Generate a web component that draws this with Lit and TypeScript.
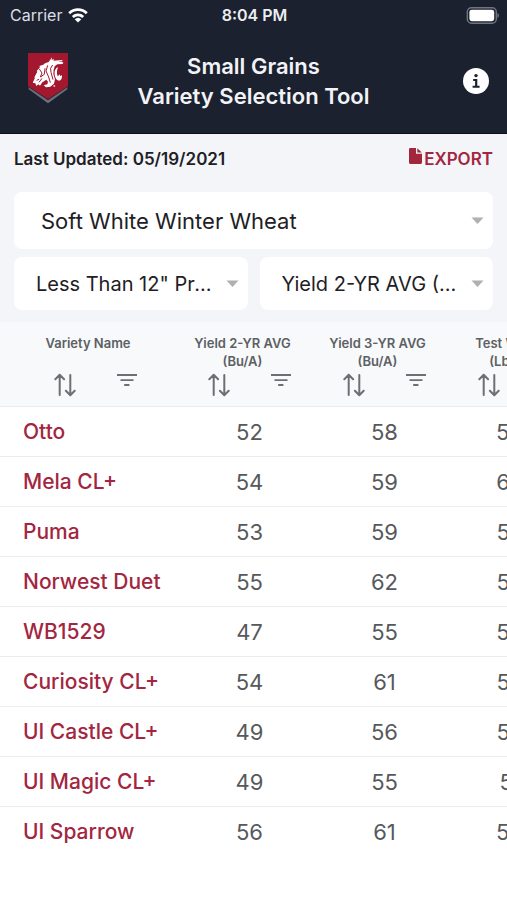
import { LitElement, html, css, svg } from "lit";
import { customElement, state } from "lit/decorators.js";

interface Column {
  lines: string[];
}

interface Variety {
  name: string;
  values: string[];
}

const COLUMNS: Column[] = [
  { lines: ["Variety Name"] },
  { lines: ["Yield 2-YR AVG", "(Bu/A)"] },
  { lines: ["Yield 3-YR AVG", "(Bu/A)"] },
  { lines: ["Test Weight", "(Lb/Bu)"] },
];

const VARIETIES: Variety[] = [
  { name: "Otto", values: ["52", "58", "59.4"] },
  { name: "Mela CL+", values: ["54", "59", "60.2"] },
  { name: "Puma", values: ["53", "59", "59.8"] },
  { name: "Norwest Duet", values: ["55", "62", "59.6"] },
  { name: "WB1529", values: ["47", "55", "59.9"] },
  { name: "Curiosity CL+", values: ["54", "61", "58.8"] },
  { name: "UI Castle CL+", values: ["49", "56", "59.3"] },
  { name: "UI Magic CL+", values: ["49", "55", "59.1"] },
  { name: "UI Sparrow", values: ["56", "61", "58.4"] },
];

const sortIcon = svg`
  <svg width="22" height="24" viewBox="0 0 22 24" fill="none" stroke="currentColor" stroke-width="2" stroke-linecap="round" stroke-linejoin="round" aria-hidden="true">
    <path d="M5.7 22V2.5M1.3 6.2L5.7 1.8L10.1 6.2M16.3 2V21.5M11.9 17.8L16.3 22.2L20.7 17.8" />
  </svg>`;

const filterIcon = svg`
  <svg width="20" height="14" viewBox="0 0 20 14" fill="none" stroke="currentColor" stroke-width="1.8" aria-hidden="true">
    <path d="M0 2H20M3.5 7.2H16.5M7.2 12H12.4" />
  </svg>`;

@customElement("app-root")
export class AppRoot extends LitElement {
  static styles = css`
    :host {
      display: block;
      min-height: 100vh;
      background: #fff;
      font-family: Inter, "Liberation Sans", sans-serif;
      color: #1e2024;
    }
    * { box-sizing: border-box; }
    svg { display: block; flex: none; }
    button, select { font: inherit; color: inherit; border: 0; padding: 0; background: none; }
    .top { background: #1b212f; color: #fff; border-bottom: 1px solid #0c0f18; }
    .status {
      display: grid;
      grid-template-columns: 1fr auto 1fr;
      align-items: center;
      height: 30px;
      padding: 0 8px 0 10px;
      font-size: 16px;
    }
    .carrier { display: flex; align-items: center; gap: 6px; color: #dcdee2; }
    .clock { font-weight: 600; color: #eceef1; }
    .battery { justify-self: end; }
    .bar {
      display: grid;
      grid-template-columns: 60px 1fr 60px;
      align-items: center;
      padding: 21px 18px 22px 18px;
    }
    .logo { padding-left: 10px; margin-top: -6px; }
    .title { margin: 0; text-align: center; font-size: 22px; line-height: 30px; font-weight: 600; color: #f2f3f6; }
    .info { justify-self: end; cursor: pointer; }
    .controls { background: #f3f5f9; padding: 14px 14px 12px; }
    .meta { display: flex; justify-content: space-between; align-items: center; height: 22px; font-size: 17px; font-weight: 600; }
    .export { display: flex; align-items: center; gap: 2px; color: #a3263f; cursor: pointer; }
    .fileicon { margin-bottom: 6px; }
    .selects { display: grid; grid-template-columns: 1fr 1fr; gap: 8px 12px; margin-top: 22px; }
    .field { display: grid; align-items: center; min-width: 0; background: #fff; border-radius: 8px; }
    .wide { grid-column: 1 / -1; }
    .field select {
      grid-area: 1 / 1;
      appearance: none;
      width: 100%;
      height: 53px;
      padding: 0 26px 0 22px;
      font-size: 20px;
      text-overflow: ellipsis;
      white-space: nowrap;
      overflow: hidden;
    }
    .wide select { height: 57px; padding-left: 27px; font-size: 22px; }
    .caret { grid-area: 1 / 1; justify-self: end; margin-right: 9px; pointer-events: none; }
    .scroller { overflow-x: auto; scrollbar-width: none; }
    table { table-layout: fixed; width: 587px; min-width: 100%; border-collapse: separate; border-spacing: 0; }
    .first { width: 182px; }
    th, td { padding: 0; border-bottom: 1px solid #ebecee; }
    thead th { height: 85px; background: #f7f9fb; vertical-align: top; color: #5c6063; }
    thead th:first-child { padding-left: 8px; }
    .head { display: flex; flex-direction: column; justify-content: space-between; height: 84px; padding: 12px 0 9px; }
    .label { padding-right: 14px; font-size: 13px; line-height: 18px; font-weight: 600; text-align: center; }
    .tools { display: flex; justify-content: center; gap: 41px; color: #6c7073; }
    .tools button { display: flex; cursor: pointer; }
    tbody th, tbody td { height: 50px; font-size: 22px; line-height: 30px; }
    tbody th { padding-left: 23px; text-align: left; font-size: 21px; font-weight: 500; }
    tbody td { text-align: center; color: #56595c; }
    tbody tr:last-child > * { border-bottom: 0; }
    a { color: #a3263f; text-decoration: none; }
  `;

  @state() private crop = "Soft White Winter Wheat";

  private caret() {
    return html`<svg class="caret" width="13" height="7" viewBox="0 0 13 7" aria-hidden="true"><path d="M0.5 0.5H12.5L6.5 7Z" fill="#b0b0b2" /></svg>`;
  }

  private header() {
    return html`
      <header class="top">
        <div class="status">
          <span class="carrier">
            Carrier
            <svg width="20" height="15" viewBox="0 0 20 15" fill="none" stroke="#fff" stroke-width="2.8" aria-label="Wi-Fi">
              <path d="M1.2 5.3A12.6 12.6 0 0 1 18.8 5.3M4.8 9A7.6 7.6 0 0 1 15.2 9" />
              <path d="M10 14.6L6.7 11.2A4.8 4.8 0 0 1 13.3 11.2Z" fill="#fff" stroke="none" />
            </svg>
          </span>
          <span class="clock">8:04 PM</span>
          <svg class="battery" width="33" height="17" viewBox="0 0 33 17" aria-label="Battery full">
            <rect x="1.3" y="0.8" width="29" height="15.4" rx="4.2" fill="none" stroke="#6f747e" stroke-width="1.4" />
            <rect x="3.4" y="2.8" width="24.8" height="11.4" rx="2.4" fill="#fff" />
            <path d="M31.4 6V11Q33 10.4 33 8.5Q33 6.6 31.4 6Z" fill="#6f747e" />
          </svg>
        </div>
        <div class="bar">
          <svg class="logo" width="50" height="51" viewBox="0 0 120 153" preserveAspectRatio="xMaxYMid meet" role="img" aria-label="Washington State University">
            <path d="M0 0H120V100L60 139L0 100Z" fill="#a3182f" />
            <path d="M2 103L60 142L118 103V109L60 151L2 109Z" fill="#69727a" />
            <path d="M14 89L22 73L18 75L28 56L26 54L36 43L34 39L46 35L51 31L62 27L72 13L71 21L78 17L76 23L103 21V25L90 26L106 28L104 33L88 34L80 40L77 50L76 63L81 79L78 92L67 101L54 103L47 97L58 94L60 86L55 80L43 88L36 98L31 94L25 99L22 91Z" fill="#fff" />
            <path d="M90 42Q77 49 80 66Q83 83 94 83Q103 82 102 67L96 69L96 64L89 70Q84 60 90 42Z" fill="#fff" />
            <path d="M34 48L42 60L37 72L49 64L51 46M59 37L54 54L62 72L67 89M74 36Q64 45 69 58L75 80M26 82L33 79M42 76L33 88" fill="none" stroke="#a3182f" stroke-width="3" />
            <circle cx="79" cy="99" r="3" fill="#e6b8c0" />
          </svg>
          <h1 class="title">Small Grains<br />Variety Selection Tool</h1>
          <button class="info" aria-label="Information">
            <svg width="26" height="26" viewBox="0 0 26 26" aria-hidden="true">
              <circle cx="13" cy="13" r="13" fill="#fff" />
              <circle cx="13" cy="7.6" r="1.7" fill="#1b212f" />
              <path d="M10.2 11H14.3V17.8H16.6V19.8H9.6V17.8H12.1V13H10.2Z" fill="#1b212f" />
            </svg>
          </button>
        </div>
      </header>`;
  }

  private controls() {
    return html`
      <section class="controls">
        <div class="meta">
          <span>Last Updated: 05/19/2021</span>
          <button class="export">
            <svg class="fileicon" width="13" height="16" viewBox="0 0 13 16" aria-hidden="true">
              <path d="M1.2 0H7V5.8H13V14.6Q13 16 11.8 16H1.2Q0 16 0 14.6V1.3Q0 0 1.2 0ZM8.3 0.2L12.8 4.6H8.3Z" fill="#a3263f" />
            </svg>
            EXPORT
          </button>
        </div>
        <div class="selects">
          <label class="field wide">
            <select aria-label="Crop" @change=${(e: Event) => (this.crop = (e.target as HTMLSelectElement).value)}>
              <option>${this.crop}</option>
            </select>
            ${this.caret()}
          </label>
          <label class="field">
            <select aria-label="Precipitation zone"><option>Less Than 12" Precipitation</option></select>
            ${this.caret()}
          </label>
          <label class="field">
            <select aria-label="Sort by"><option>Yield 2-YR AVG (Bu/A)</option></select>
            ${this.caret()}
          </label>
        </div>
      </section>`;
  }

  render() {
    return html`
      ${this.header()}
      <main>
        ${this.controls()}
        <div class="scroller">
          <table>
            <thead>
              <tr>
                ${COLUMNS.map(
                  (c, i) => html`
                    <th scope="col" class=${i === 0 ? "first" : "value"}>
                      <div class="head">
                        <div class="label">${c.lines.map((l) => html`<div>${l}</div>`)}</div>
                        <div class="tools">
                          <button aria-label="Sort by ${c.lines[0]}">${sortIcon}</button>
                          <button aria-label="Filter by ${c.lines[0]}">${filterIcon}</button>
                        </div>
                      </div>
                    </th>`
                )}
              </tr>
            </thead>
            <tbody>
              ${VARIETIES.map(
                (v) => html`
                  <tr>
                    <th scope="row"><a href="#">${v.name}</a></th>
                    ${v.values.map((x) => html`<td>${x}</td>`)}
                  </tr>`
              )}
            </tbody>
          </table>
        </div>
      </main>`;
  }
}
